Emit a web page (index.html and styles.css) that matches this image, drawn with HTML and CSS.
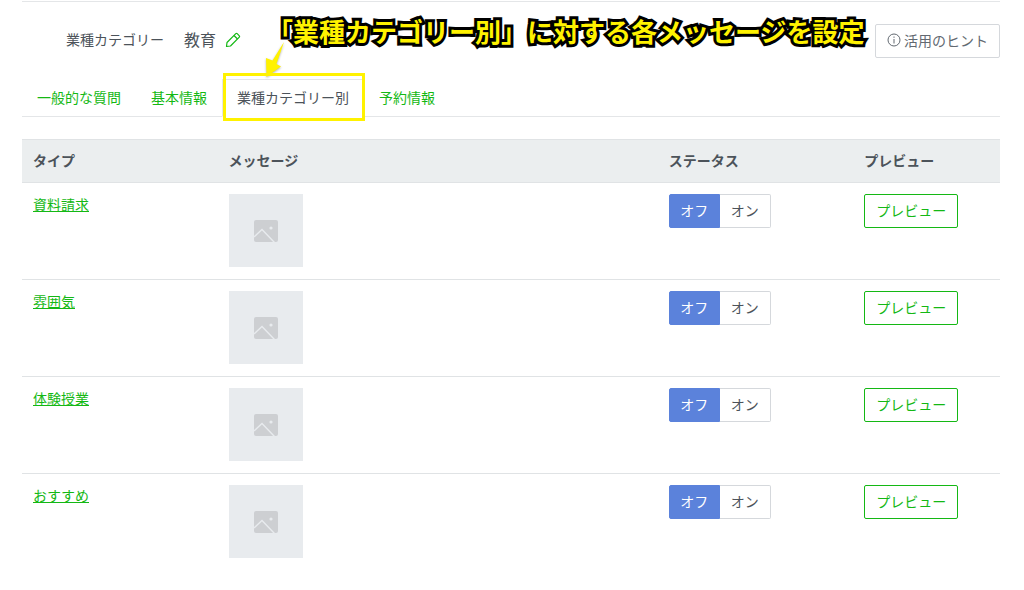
FILE: index.html
```html
<!DOCTYPE html>
<html lang="ja">
    <head>
        <meta charset="utf-8">
        <title>業種カテゴリー別</title>
        <link rel="stylesheet" href="styles.css">
    </head>
    <body>
        <!-- shared icons -->
        <svg class="sprite" aria-hidden="true">
            <symbol id="picture" viewBox="0 0 24 22">
                <path fill="#cdcfd2" d="M2 0H22Q24 0 24 2V20Q24 22 22 22H2Q0 22 0 20V2Q0 0 2 0Z"/>
                <path fill="none" stroke="#e8ebee" stroke-width="1.4" d="M0 17L8 9.5L20.5 22.5"/>
                <circle cx="17" cy="8" r="1.6" fill="#e8ebee"/>
            </symbol>
        </svg>
        <main class="page">
            <header class="top">
                <span class="label">業種カテゴリー</span>
                <span class="category">教育</span>
                <button class="edit" type="button" aria-label="編集">
                    <svg width="16" height="16" viewBox="0 0 16 16" fill="none" stroke="#14b814" stroke-width="1.2" stroke-linejoin="round">
                        <path d="M1.5 14.5L2 10.5L10.8 1.7Q11.5 1 12.2 1.7L14.3 3.8Q15 4.5 14.3 5.2L5.5 14Z"/>
                        <path d="M9 3.5L12.5 7"/>
                    </svg>
                </button>
                <button class="hint" type="button">
                    <svg width="14" height="14" viewBox="0 0 14 14" fill="none" stroke="#626971">
                        <circle cx="7" cy="7" r="6"/>
                        <path d="M7 6V10.5M7 3.5V4.8"/>
                    </svg>
                    活用のヒント
                </button>
                <p class="note">「業種カテゴリー別」に対する各メッセージを設定</p>
            </header>
            <nav class="tabs">
                <a href="#">一般的な質問</a>
                <a href="#">基本情報</a>
                <a href="#" class="active">業種カテゴリー別
                    <svg class="arrow" width="22" height="38" viewBox="0 0 22 38">
                        <path fill="#fff200" d="M20 2L8.5 20.5L2 18L2.5 37L17 26.5L12.5 24Z"/>
                    </svg>
                </a>
                <a href="#">予約情報</a>
            </nav>
            <table class="list">
                <thead>
                    <tr>
                        <th class="type">タイプ</th>
                        <th class="message">メッセージ</th>
                        <th class="status">ステータス</th>
                        <th>プレビュー</th>
                    </tr>
                </thead>
                <tbody>
                    <tr>
                        <td><a href="#">資料請求</a></td>
                        <td><div class="thumb"><svg width="24" height="22"><use href="#picture"/></svg></div></td>
                        <td>
                            <div class="switch">
                                <label><input type="radio" name="request" checked><span>オフ</span></label>
                                <label><input type="radio" name="request"><span>オン</span></label>
                            </div>
                        </td>
                        <td><button class="preview" type="button">プレビュー</button></td>
                    </tr>
                    <tr>
                        <td><a href="#">雰囲気</a></td>
                        <td><div class="thumb"><svg width="24" height="22"><use href="#picture"/></svg></div></td>
                        <td>
                            <div class="switch">
                                <label><input type="radio" name="mood" checked><span>オフ</span></label>
                                <label><input type="radio" name="mood"><span>オン</span></label>
                            </div>
                        </td>
                        <td><button class="preview" type="button">プレビュー</button></td>
                    </tr>
                    <tr>
                        <td><a href="#">体験授業</a></td>
                        <td><div class="thumb"><svg width="24" height="22"><use href="#picture"/></svg></div></td>
                        <td>
                            <div class="switch">
                                <label><input type="radio" name="trial" checked><span>オフ</span></label>
                                <label><input type="radio" name="trial"><span>オン</span></label>
                            </div>
                        </td>
                        <td><button class="preview" type="button">プレビュー</button></td>
                    </tr>
                    <tr>
                        <td><a href="#">おすすめ</a></td>
                        <td><div class="thumb"><svg width="24" height="22"><use href="#picture"/></svg></div></td>
                        <td>
                            <div class="switch">
                                <label><input type="radio" name="recommend" checked><span>オフ</span></label>
                                <label><input type="radio" name="recommend"><span>オン</span></label>
                            </div>
                        </td>
                        <td><button class="preview" type="button">プレビュー</button></td>
                    </tr>
                </tbody>
            </table>
        </main>
    </body>
</html>
```
FILE: styles.css
```css
*{
    box-sizing: border-box;
    margin: 0;
    padding: 0;
}
body{
    background: #fff;
    color: #4c535a;
    font-family: "Noto Sans CJK JP", sans-serif;
    font-size: 14px;
    line-height: 20px;
}
button{
    font: inherit;
    background: #fff;
    cursor: pointer;
}
a{
    color: #14b814;
}
.sprite{
    display: none;
}
.page{
    margin: 1px 24px 0 22px;
    border-top: 1px solid #e4e6e8;
}

.top{
    position: relative;
    display: flex;
    align-items: center;
    height: 77px;
    padding-left: 44px;
}
.label, .category{
    padding-bottom: 4px;
}
.category{
    margin: 0 9px 0 20px;
    font-size: 16px;
}
.edit{
    display: flex;
    padding-bottom: 2px;
    border: 0;
}
.hint{
    display: flex;
    align-items: center;
    gap: 3px;
    height: 34px;
    margin-left: auto;
    padding: 0 11px 2px;
    border: 1px solid #d5d8dc;
    border-radius: 2px;
    color: #626971;
}
/* yellow callout over the page */
.note{
    position: absolute;
    left: 245px;
    top: 11px;
    font-size: 26px;
    font-weight: 700;
    line-height: 36px;
    white-space: nowrap;
    color: #fff200;
    -webkit-text-stroke: 6px #000;
    paint-order: stroke fill;
}

.tabs{
    display: flex;
    border-bottom: 1px solid #e4e6e8;
}
.tabs a{
    padding: 7px 14px 8px;
    border: 1px solid transparent;
    text-decoration: none;
}
.tabs .active{
    position: relative;
    margin-bottom: -1px;
    border-color: #e4e6e8;
    border-bottom-color: #fff;
    background: #fff;
    color: #4c535a;
}
.tabs .active::after{
    content: "";
    position: absolute;
    inset: -7px -2px -5px 0;
    border: 3px solid #fff200;
}
.arrow{
    position: absolute;
    left: 41px;
    top: -40px;
    filter: drop-shadow(0 1px 1px rgba(0, 0, 0, .3));
}

.list{
    width: 100%;
    margin-top: 22px;
    border-collapse: separate;
    border-spacing: 0;
    table-layout: fixed;
}
.list th{
    height: 44px;
    padding: 0 11px 3px;
    background: #ebeeef;
    border-top: 1px solid #e0e3e5;
    border-bottom: 1px solid #e0e3e5;
    text-align: left;
}
.list .type, .list .status{
    width: 20%;
}
.list .message{
    width: 45%;
}
.list td{
    padding: 11px 11px 12px;
    border-bottom: 1px solid #e0e3e5;
    vertical-align: top;
}
.list tr:last-child td{
    border-bottom: 0;
}
.thumb{
    display: flex;
    align-items: center;
    justify-content: center;
    width: 74px;
    height: 73px;
    background: #e8ebee;
}
.switch{
    display: flex;
}
.switch input{
    position: absolute;
    opacity: 0;
}
.switch span{
    display: block;
    width: 51px;
    padding: 5px 0 7px;
    border: 1px solid #d5d8dc;
    border-left: 0;
    border-radius: 0 2px 2px 0;
    text-align: center;
}
.switch label:first-child span{
    border-left: 1px solid #d5d8dc;
    border-radius: 2px 0 0 2px;
}
.switch input:checked + span{
    background: #5b82db;
    border-color: #5b82db !important;
    color: #fff;
}
.preview{
    height: 34px;
    padding: 0 11px 2px;
    border: 1px solid #14b814;
    border-radius: 2px;
    color: #14b814;
}
```
